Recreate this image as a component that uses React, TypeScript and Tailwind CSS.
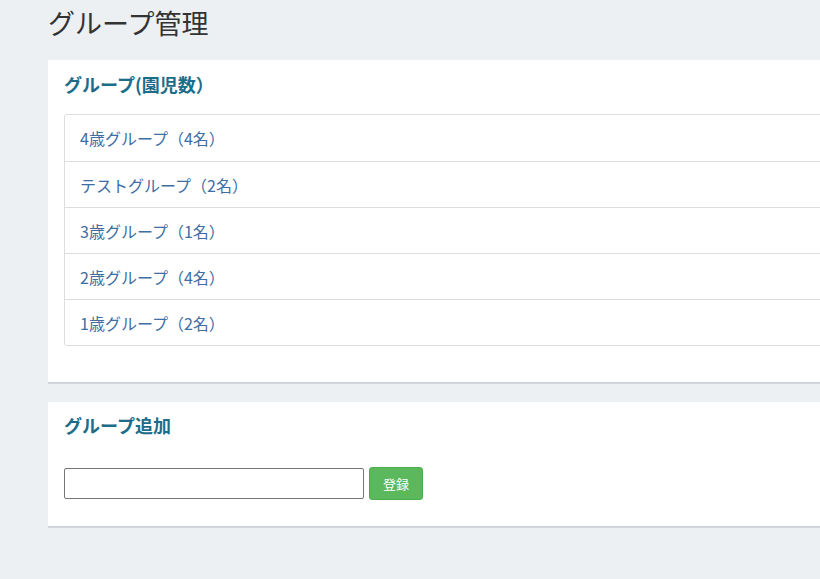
import React from "react";

const groups = [
  "4歳グループ（4名）",
  "テストグループ（2名）",
  "3歳グループ（1名）",
  "2歳グループ（4名）",
  "1歳グループ（2名）",
];

export default function App() {
  return (
    <div
      className="w-[820px] h-[579px] overflow-hidden bg-[#ecf0f3] text-[#333]"
      style={{ fontFamily: '"Noto Sans CJK JP", "Noto Sans", sans-serif' }}
    >
      <div className="pl-[48px] w-[900px]">
        <h1 className="text-[27px] leading-[32px] pt-[7px] h-[60px] font-normal text-[#333]">グループ管理</h1>

        <div className="bg-white border-b-2 border-[#d2d6da] pt-[11px] px-[16px] pb-[36px]">
          <h3 className="text-[18px] font-bold text-[#1b6d89] leading-[26px] h-[43px]">グループ(園児数）</h3>
          <ul className="border border-[#dddddd] rounded-[3px]">
            {groups.map((g, i) => (
              <li
                key={g}
                className={`h-[46px] flex items-center px-[15px] text-[16px] text-[#3d6ea4] ${
                  i > 0 ? "border-t border-[#dddddd]" : ""
                }`}
              >
                {g}
              </li>
            ))}
          </ul>
        </div>

        <div className="mt-[18px] bg-white border-b-2 border-[#d2d6da] pt-[10px] px-[16px] pb-[26px]">
          <h3 className="text-[18px] font-bold text-[#1b6d89] leading-[26px] h-[55px]">グループ追加</h3>
          <div className="flex items-center gap-[5px]">
            <input className="w-[300px] h-[31px] border border-[#767676] rounded-[2px] bg-white" />
            <button className="w-[54px] h-[33px] rounded-[3px] bg-[#5cb85c] border border-[#4cae4c] text-white text-[13px]">
              登録
            </button>
          </div>
        </div>
      </div>
    </div>
  );
}
